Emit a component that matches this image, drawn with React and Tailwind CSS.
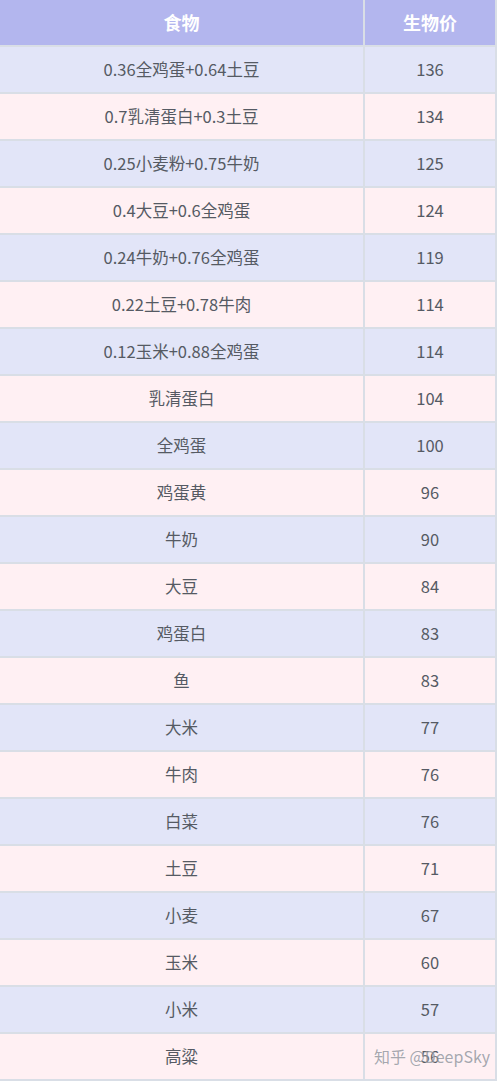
const rows = [
  ['0.36全鸡蛋+0.64土豆', '136'],
  ['0.7乳清蛋白+0.3土豆', '134'],
  ['0.25小麦粉+0.75牛奶', '125'],
  ['0.4大豆+0.6全鸡蛋', '124'],
  ['0.24牛奶+0.76全鸡蛋', '119'],
  ['0.22土豆+0.78牛肉', '114'],
  ['0.12玉米+0.88全鸡蛋', '114'],
  ['乳清蛋白', '104'],
  ['全鸡蛋', '100'],
  ['鸡蛋黄', '96'],
  ['牛奶', '90'],
  ['大豆', '84'],
  ['鸡蛋白', '83'],
  ['鱼', '83'],
  ['大米', '77'],
  ['牛肉', '76'],
  ['白菜', '76'],
  ['土豆', '71'],
  ['小麦', '67'],
  ['玉米', '60'],
  ['小米', '57'],
  ['高粱', '56'],
];

const App = () => {
  return (
    <div
      className="relative w-[497px] h-[1082px] bg-white overflow-hidden"
      style={{ fontFamily: '"Noto Sans CJK SC", "Noto Sans", sans-serif' }}
    >
      <div className="grid grid-cols-[363px_130px] gap-[2px] bg-[#d9dee6] pr-[2px] pb-[2px]">
        <div className="h-[45px] bg-[#b3b6ee] flex items-center justify-center text-white font-bold text-[18px]">食物</div>
        <div className="h-[45px] bg-[#b3b6ee] flex items-center justify-center text-white font-bold text-[18px]">生物价</div>
        {rows.map(([food, value], i) => {
          const bg = i % 2 === 0 ? 'bg-[#e2e5f8]' : 'bg-[#fff0f3]';
          return [
            <div key={food + 'a'} className={`h-[45px] ${bg} flex items-center justify-center text-[#555a63] text-[16.5px]`}>
              {food}
            </div>,
            <div key={food + 'b'} className={`h-[45px] ${bg} flex items-center justify-center text-[#555a63] text-[16.5px]`}>
              {value}
            </div>,
          ];
        })}
      </div>
      <div
        className="absolute left-[374px] top-[1044px] whitespace-nowrap text-[16px] text-[#8a8f98] opacity-75"
        style={{ textShadow: '0 0 2px #fff' }}
      >
        知乎 @DeepSky
      </div>
    </div>
  );
};

export default App;
